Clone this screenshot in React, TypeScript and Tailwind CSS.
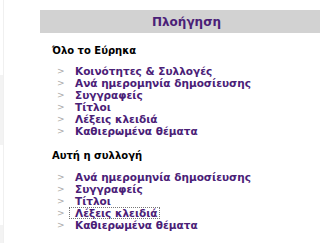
import React from 'react';

const allLinks = [
  'Κοινότητες & Συλλογές',
  'Ανά ημερομηνία δημοσίευσης',
  'Συγγραφείς',
  'Τίτλοι',
  'Λέξεις κλειδιά',
  'Καθιερωμένα θέματα',
];

const collectionLinks = [
  'Ανά ημερομηνία δημοσίευσης',
  'Συγγραφείς',
  'Τίτλοι',
  'Λέξεις κλειδιά',
  'Καθιερωμένα θέματα',
];

const font = { fontFamily: '"DejaVu Sans", Verdana, sans-serif' };

const LinkList = ({ links, focused }: { links: string[]; focused?: string }) => (
  <ul className="ml-[5px]">
    {links.map((link) => (
      <li key={link} className="flex h-[12px] items-center text-[10.5px] font-bold leading-[12px]">
        <span className="w-[18px] text-[9px] font-normal text-[#aaa]">&gt;</span>
        {link === focused ? (
          <a className="-ml-[6px] border border-dotted border-[#777] pl-[5px] pr-[1px] leading-[10px] text-[#4a2077]">
            {link}
          </a>
        ) : (
          <a className="text-[#4a2077]">{link}</a>
        )}
      </li>
    ))}
  </ul>
);

export default function App() {
  return (
    <div className="flex h-[243px] w-full overflow-hidden bg-white" style={font}>
      {/* faint edge of the neighbouring column */}
      <div className="flex w-[4px] shrink-0 flex-col border-r border-[#f0f0f0]">
        <div className="h-[75px]" />
        <div className="h-[70px] bg-[#f3f3f3]" />
        <div className="h-[80px]" />
        <div className="flex-1 bg-[#f3f3f3]" />
      </div>

      <div className="ml-[36px] min-w-0 flex-1 pt-[10px]">
        <div className="flex h-[23px] items-center justify-center bg-[#d2d2d2] pl-[13px]">
          <h2 className="text-[12px] font-bold text-[#4a2077]">Πλοήγηση</h2>
        </div>

        <div className="pl-[12px]">
          <h3 className="mt-[12px] text-[10px] font-bold leading-[12px] text-black">Όλο το Εύρηκα</h3>
          <div className="mt-[8px]">
            <LinkList links={allLinks} />
          </div>

          <h3 className="mt-[13px] text-[10px] font-bold leading-[12px] text-black">Αυτή η συλλογή</h3>
          <div className="mt-[9px]">
            <LinkList links={collectionLinks} focused="Λέξεις κλειδιά" />
          </div>
        </div>
      </div>
    </div>
  );
}
